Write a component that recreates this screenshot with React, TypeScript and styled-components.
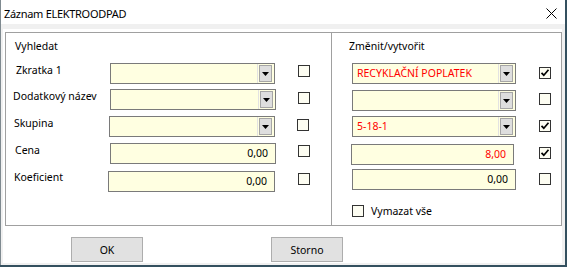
import React from "react";
import styled, { createGlobalStyle } from "styled-components";

const GlobalStyle = createGlobalStyle`
  html, body { margin: 0; padding: 0; background: #34505f; }
  body { font-family: "Noto Sans", "Liberation Sans", sans-serif; font-size: 10.5px; color: #000; }
  * { box-sizing: border-box; }
`;

const Window = styled.div`
  width: 565px;
  height: 265px;
  border-left: 1px solid #7f8a90;
  background: #f0f0f0;
  display: flex;
  flex-direction: column;
`;

const TitleBar = styled.div`
  height: 24px;
  background: #fff;
  display: flex;
  align-items: center;
  justify-content: space-between;
  padding: 2px 8px 0 3px;
`;

const Title = styled.div`
  font-size: 11px;
  letter-spacing: -0.3px;
  line-height: 15px;
`;

const Client = styled.div`
  flex: 1;
  display: flex;
  padding: 5px 3px 2px 2px;
`;

const Body = styled.div`
  flex: 1;
  background: #fff;
  padding: 3px 0 0 2px;
  display: flex;
  flex-direction: column;
`;

const Frame = styled.div`
  width: 557px;
  height: 194px;
  border: 1px solid #a0a0a0;
  display: grid;
  grid-template-columns: 325px 230px;
`;

const Panel = styled.div<{ $divider?: boolean }>`
  display: flex;
  flex-direction: column;
  padding-top: 6px;
  border-left: ${(p) => (p.$divider ? "1px solid #a0a0a0" : "none")};
`;

const Heading = styled.div<{ $indent: number }>`
  padding-left: ${(p) => p.$indent}px;
  line-height: 15px;
  height: 15px;
`;

const Row = styled.div<{ $mt: number }>`
  display: flex;
  align-items: flex-start;
  height: 21px;
  margin-top: ${(p) => p.$mt}px;
`;

const Label = styled.div<{ $width: number; $indent: number; $dy?: number }>`
  width: ${(p) => p.$width}px;
  padding-left: ${(p) => p.$indent}px;
  margin-top: ${(p) => p.$dy ?? 0}px;
  line-height: 15px;
  white-space: nowrap;
  flex: none;
`;

const Field = styled.div<{ $width: number; $ml?: number; $numeric?: boolean }>`
  width: ${(p) => p.$width}px;
  height: 21px;
  margin-left: ${(p) => p.$ml ?? 0}px;
  border: 1px solid #7a7a7a;
  background: #ffffe1;
  display: flex;
  align-items: center;
  justify-content: ${(p) => (p.$numeric ? "flex-end" : "flex-start")};
  padding-right: ${(p) => (p.$numeric ? 7 : 0)}px;
  flex: none;
`;

const Value = styled.span<{ $red?: boolean }>`
  color: ${(p) => (p.$red ? "#ff0000" : "#000")};
  line-height: 15px;
  white-space: nowrap;
`;

const ComboText = styled(Value)`
  flex: 1;
  padding-left: 4px;
  overflow: hidden;
`;

const Separator = styled.div`
  width: 1px;
  align-self: stretch;
  background: #e2e2e2;
  margin-right: 1px;
`;

const DropButton = styled.div`
  width: 13px;
  height: 17px;
  margin-right: 2px;
  border: 1px solid #a6a6a6;
  background: #dedede;
  display: flex;
  align-items: center;
  justify-content: center;
`;

const Box = styled.div<{ $ml: number; $dy: number }>`
  width: 12px;
  height: 12px;
  margin-left: ${(p) => p.$ml}px;
  margin-top: ${(p) => p.$dy}px;
  border: 1px solid #333;
  background: #fdfdf2;
  display: flex;
  align-items: center;
  justify-content: center;
  flex: none;
`;

const ClearRow = styled.div`
  display: flex;
  align-items: center;
  gap: 7px;
  margin-top: 15px;
  padding-left: 20px;
  height: 12px;
`;

const Buttons = styled.div`
  display: flex;
  gap: 128px;
  margin-top: 11px;
  padding-left: 66px;
`;

const Button = styled.button`
  width: 72px;
  height: 25px;
  padding: 0;
  border: 1px solid #adadad;
  background: #e1e1e1;
  font: inherit;
  color: #000;
`;

const Arrow = () => (
  <svg width="7" height="4" viewBox="0 0 7 4">
    <polygon points="0,0 7,0 3.5,4" fill="#000" />
  </svg>
);

const CheckBox = ({ checked, ml = 0, dy = 0 }: { checked?: boolean; ml?: number; dy?: number }) => (
  <Box $ml={ml} $dy={dy}>
    {checked && (
      <svg width="10" height="10" viewBox="0 0 10 10">
        <polyline points="1.5,4.8 3.8,7.2 8.5,1.8" fill="none" stroke="#000" strokeWidth="1.7" />
      </svg>
    )}
  </Box>
);

const Combo = ({ width, ml, text, red }: { width: number; ml?: number; text?: string; red?: boolean }) => (
  <Field $width={width} $ml={ml}>
    <ComboText $red={red}>{text}</ComboText>
    <Separator />
    <DropButton>
      <Arrow />
    </DropButton>
  </Field>
);

type LeftRow = {
  label: string;
  indent: number;
  mt: number;
  x: number;
  w: number;
  combo?: boolean;
  value?: string;
  cbml: number;
  cbdy: number;
  ldy?: number;
};

const leftRows: LeftRow[] = [
  { label: "Zkratka 1", indent: 10, mt: 9, x: 104, w: 165, combo: true, cbml: 23, cbdy: 2 },
  { label: "Dodatkový název", indent: 7, mt: 5, x: 104, w: 166, combo: true, cbml: 22, cbdy: 3 },
  { label: "Skupina", indent: 8, mt: 6, x: 103, w: 166, combo: true, cbml: 22, cbdy: 3 },
  { label: "Cena", indent: 9, mt: 6, x: 104, w: 166, value: "0,00", cbml: 22, cbdy: 2 },
  { label: "Koeficient", indent: 8, mt: 7, x: 102, w: 167, value: "0,00", cbml: 23, cbdy: 2, ldy: -1 },
];

type RightRow = {
  mt: number;
  x: number;
  w: number;
  combo?: boolean;
  value?: string;
  red?: boolean;
  checked?: boolean;
  cbml: number;
  cbdy: number;
};

const rightRows: RightRow[] = [
  { mt: 9, x: 20, w: 164, combo: true, value: "RECYKLAČNÍ POPLATEK", red: true, checked: true, cbml: 23, cbdy: 4 },
  { mt: 6, x: 20, w: 164, combo: true, cbml: 23, cbdy: 3 },
  { mt: 5, x: 20, w: 164, combo: true, value: "5-18-1", red: true, checked: true, cbml: 23, cbdy: 4 },
  { mt: 7, x: 19, w: 163, value: "8,00", red: true, checked: true, cbml: 25, cbdy: 3 },
  { mt: 4, x: 20, w: 164, value: "0,00", cbml: 23, cbdy: 4 },
];

export default function App() {
  return (
    <>
      <GlobalStyle />
      <Window>
        <TitleBar>
          <Title>Záznam ELEKTROODPAD</Title>
          <svg width="11" height="11" viewBox="0 0 11 11">
            <line x1="0.5" y1="0.5" x2="10.5" y2="10.5" stroke="#000" strokeWidth="1" />
            <line x1="10.5" y1="0.5" x2="0.5" y2="10.5" stroke="#000" strokeWidth="1" />
          </svg>
        </TitleBar>
        <Client>
          <Body>
            <Frame>
              <Panel>
                <Heading $indent={9}>Vyhledat</Heading>
                {leftRows.map((r) => (
                  <Row key={r.label} $mt={r.mt}>
                    <Label $width={r.x} $indent={r.indent} $dy={r.ldy}>
                      {r.label}
                    </Label>
                    {r.combo ? (
                      <Combo width={r.w} />
                    ) : (
                      <Field $width={r.w} $numeric>
                        <Value>{r.value}</Value>
                      </Field>
                    )}
                    <CheckBox ml={r.cbml} dy={r.cbdy} />
                  </Row>
                ))}
              </Panel>
              <Panel $divider>
                <Heading $indent={17}>Změnit/vytvořit</Heading>
                {rightRows.map((r, i) => (
                  <Row key={i} $mt={r.mt}>
                    {r.combo ? (
                      <Combo width={r.w} ml={r.x} text={r.value} red={r.red} />
                    ) : (
                      <Field $width={r.w} $ml={r.x} $numeric>
                        <Value $red={r.red}>{r.value}</Value>
                      </Field>
                    )}
                    <CheckBox checked={r.checked} ml={r.cbml} dy={r.cbdy} />
                  </Row>
                ))}
                <ClearRow>
                  <CheckBox />
                  <Value>Vymazat vše</Value>
                </ClearRow>
              </Panel>
            </Frame>
            <Buttons>
              <Button>OK</Button>
              <Button>Storno</Button>
            </Buttons>
          </Body>
        </Client>
      </Window>
    </>
  );
}
